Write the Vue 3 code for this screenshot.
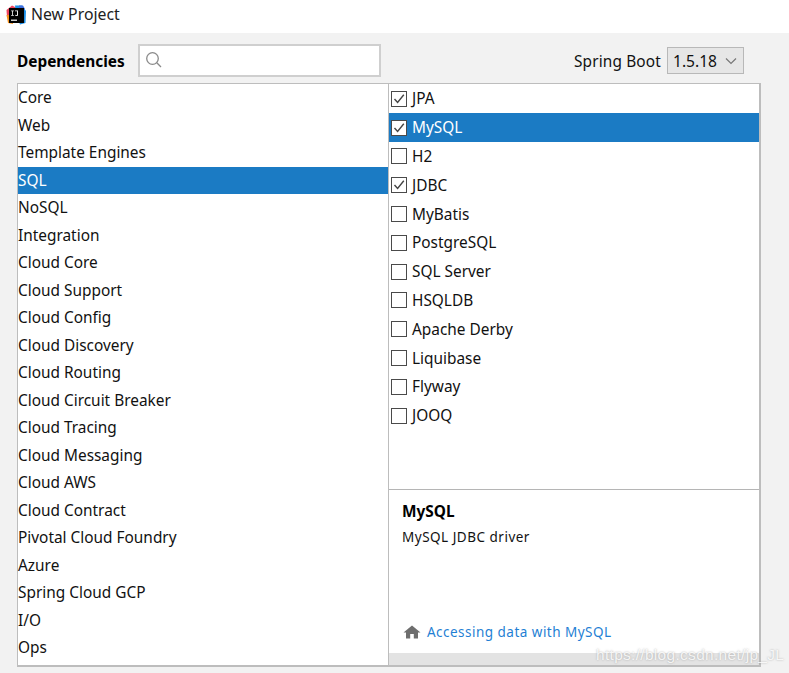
<script setup>
const categories = ['Core','Web','Template Engines','SQL','NoSQL','Integration','Cloud Core','Cloud Support','Cloud Config','Cloud Discovery','Cloud Routing','Cloud Circuit Breaker','Cloud Tracing','Cloud Messaging','Cloud AWS','Cloud Contract','Pivotal Cloud Foundry','Azure','Spring Cloud GCP','I/O','Ops']
const deps = [
  { name: 'JPA', checked: true },
  { name: 'MySQL', checked: true, selected: true },
  { name: 'H2' },
  { name: 'JDBC', checked: true },
  { name: 'MyBatis' },
  { name: 'PostgreSQL' },
  { name: 'SQL Server' },
  { name: 'HSQLDB' },
  { name: 'Apache Derby' },
  { name: 'Liquibase' },
  { name: 'Flyway' },
  { name: 'JOOQ' }
]
</script>

<template>
  <div class="window">
    <header class="titlebar">
      <svg class="logo" width="20" height="20" viewBox="0 0 20 20">
        <path d="M0.5 5 L6 0.5 L11 3 L8 12 L1 12 Z" fill="#f0455f" />
        <path d="M0.5 10 L6 10 L7 19 L2 18 Z" fill="#f7931e" />
        <path d="M9 0.5 L16 0.5 L20 6 L19.5 18 L14 19.5 L10 10 Z" fill="#1e90e8" />
        <path d="M13 0.5 L17 0.5 L19 4 L13 6 Z" fill="#3f6fe0" />
        <rect x="3" y="3" width="15" height="15" fill="#000" />
        <rect x="5" y="14.6" width="6" height="1.2" fill="#fff" />
        <path d="M5.2 5.5h2.6v.8h-.9v3.6h.9v.8H5.2v-.8h.9V6.3h-.9zM9 5.5h3v4.2c0 1-.6 1.4-1.5 1.4-.7 0-1.2-.3-1.5-.8l.6-.5c.2.3.5.5.8.5.4 0 .7-.2.7-.7V6.3H9z" fill="#fff" />
      </svg>
      <span class="title">New Project</span>
    </header>

    <main class="body">
      <div class="toolbar">
        <strong class="dep-label">Dependencies</strong>
        <div class="search">
          <svg width="19" height="19" viewBox="0 0 19 19" fill="none" stroke="#8a8a8a" stroke-width="1.3">
            <circle cx="7.5" cy="7.5" r="5.8" />
            <path d="M11.8 11.8 L16 16" />
          </svg>
        </div>
        <span class="spring-label">Spring Boot</span>
        <div class="version">
          <span>1.5.18</span>
          <svg width="12" height="8" viewBox="0 0 12 8" fill="none" stroke="#777" stroke-width="1.2">
            <path d="M1 1.5 L6 6.5 L11 1.5" />
          </svg>
        </div>
      </div>

      <div class="panels">
        <ul class="categories">
          <li v-for="c in categories" :key="c" class="cat" :class="{ active: c === 'SQL' }">{{ c }}</li>
        </ul>
        <section class="right">
          <ul class="deps">
            <li v-for="d in deps" :key="d.name" class="dep" :class="{ active: d.selected }">
              <span class="box">
                <svg v-if="d.checked" width="14" height="14" viewBox="0 0 14 14" fill="none" stroke="#444" stroke-width="1.4">
                  <path d="M2.5 7 L5.6 10.5 L11.8 2.8" />
                </svg>
              </span>
              <span class="dep-name">{{ d.name }}</span>
            </li>
          </ul>
          <div class="details">
            <h2 class="d-title">MySQL</h2>
            <p class="d-text">MySQL JDBC driver</p>
            <div class="d-link">
              <svg width="18" height="14" viewBox="0 0 18 14">
                <path d="M9 0.5 L17.5 7.5 L15 7.5 L15 13.5 L10.8 13.5 L10.8 9 L7.2 9 L7.2 13.5 L3 13.5 L3 7.5 L0.5 7.5 Z" fill="#6e6e6e" />
              </svg>
              <a class="link">Accessing data with MySQL</a>
            </div>
          </div>
          <div class="strip"></div>
        </section>
      </div>
    </main>
    <span class="watermark">https://blog.csdn.net/jp_JL</span>
  </div>
</template>

<style scoped>
.window {
  position: relative;
  width: 789px;
  height: 673px;
  overflow: hidden;
  background: #f2f2f2;
  font-family: "Noto Sans", "Open Sans", sans-serif;
  font-size: 15.4px;
  color: #111;
}
.titlebar {
  height: 33px;
  background: #fff;
  display: flex;
  align-items: center;
  gap: 5px;
  padding-left: 6px;
  box-sizing: border-box;
}
.logo { flex: none; margin-top: -4px; }
.title { font-size: 15.8px; color: #222; margin-top: -6px; }
.body {
  padding: 11px 28px 0 17px;
}
.toolbar {
  height: 33px;
  display: flex;
  align-items: center;
  padding-right: 17px;
}
.dep-label { font-size: 15.4px; font-weight: 700; width: 121px; margin-top: 2px; color: #000; }
.search {
  width: 243px;
  height: 33px;
  box-sizing: border-box;
  border: 2px solid #cfcfcf;
  background: #fff;
  display: flex;
  align-items: center;
  padding-left: 5px;
}
.spring-label { margin-left: auto; margin-top: 2px; font-size: 15.4px; color: #111; letter-spacing: 0.15px; }
.version {
  margin-left: 6px;
  width: 77px;
  height: 27px;
  box-sizing: border-box;
  border: 1px solid #b8b8b8;
  background: #e6e6e6;
  display: flex;
  align-items: center;
  justify-content: space-between;
  padding: 0 6px 0 5px;
  color: #111;
}
.version span { font-size: 15.6px; }
.panels {
  margin-top: 6px;
  height: 584px;
  width: 744px;
  display: flex;
  box-sizing: border-box;
  border: 1px solid #bdbdbd;
  border-bottom-width: 2px;
  border-right-width: 2px;
  background: #fff;
}
ul { list-style: none; margin: 0; padding: 0; }
.categories {
  width: 370px;
  flex: none;
  border-right: 1px solid #bdbdbd;
}
.cat {
  height: 27.5px;
  line-height: 28px;
  color: #111;
}
.active { background: #1b7bc4; color: #fff; }
.cat.active { color: #fff; }
.right {
  flex: 1;
  display: flex;
  flex-direction: column;
  min-width: 0;
}
.deps { height: 405px; border-bottom: 1px solid #b5b5b5; flex: none; }
.dep {
  height: 28.8px;
  display: flex;
  align-items: center;
  gap: 5px;
  padding-left: 2px;
}
.dep-name { margin-top: 1px; }
.box {
  width: 16px;
  height: 16px;
  margin-top: 1px;
  box-sizing: border-box;
  border: 1px solid #4a4a4a;
  background: #fff;
  display: flex;
  align-items: center;
  justify-content: center;
}
.details {
  flex: 1;
  position: relative;
  padding: 11px 13px 0;
}
.d-title { margin: 0; font-size: 15.4px; font-weight: 700; line-height: 22px; color: #000; }
.d-text { margin: 4px 0 0; font-size: 13.5px; line-height: 20px; color: #111; letter-spacing: 0.5px; }
.d-link {
  position: absolute;
  left: 14px;
  bottom: 12px;
  display: flex;
  align-items: center;
  gap: 6px;
}
.link { font-size: 13.5px; color: #1f7fd4; letter-spacing: 0.48px; }
.strip { height: 12px; background: #e3e3e3; flex: none; }
.watermark {
  position: absolute;
  left: 596px;
  top: 646px;
  font-family: "Liberation Sans", sans-serif;
  font-size: 15.5px;
  letter-spacing: 0.3px;
  color: rgba(255,255,255,0.85);
  text-shadow: 0 0 2px rgba(120,120,120,0.6);
}
</style>
